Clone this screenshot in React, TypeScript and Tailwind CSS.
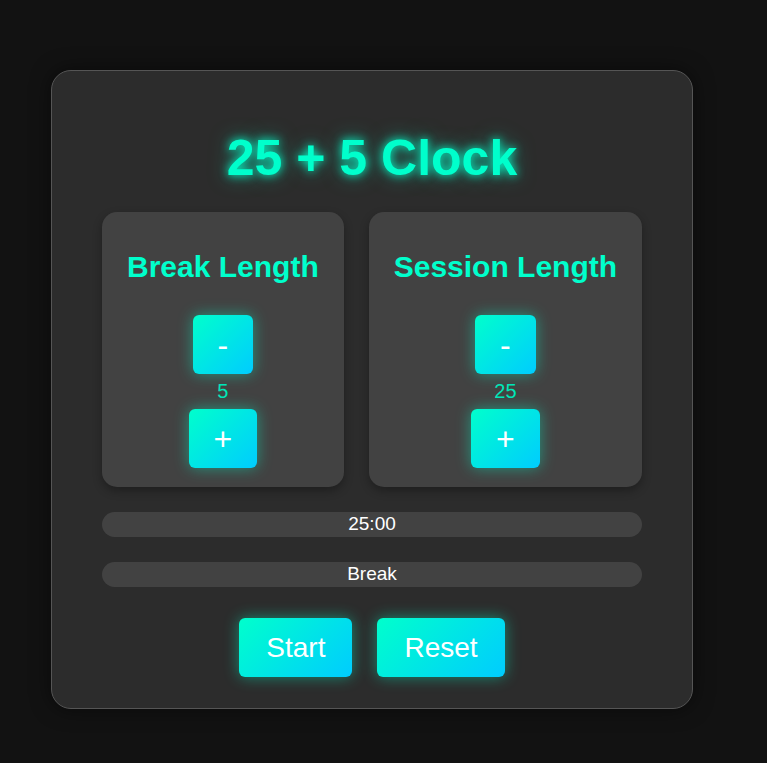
import React, { useState } from 'react';

const gradBtn =
  'flex items-center justify-center rounded-[6px] bg-[linear-gradient(135deg,#00ffcc,#00ccff)] text-white shadow-[0_0_15px_rgba(0,255,204,0.45)]';

function LengthControl({ title, value, onDec, onInc }: { title: string; value: number; onDec: () => void; onInc: () => void }) {
  return (
    <div className="flex flex-auto flex-col items-center rounded-[15px] bg-[#424242] px-[25px] pt-[38px] pb-[19px] shadow-[0_4px_10px_rgba(0,0,0,0.3)]">
      <h2 className="whitespace-nowrap text-[30px] font-bold leading-[34px] text-[#00ffcc]">{title}</h2>
      <button onClick={onDec} className={`${gradBtn} mt-[31px] h-[59px] px-[25px] text-[32px] leading-none`}>
        -
      </button>
      <div className="mt-[5px] mb-[6px] text-[20px] leading-[24px] text-[#00e6b8]">{value}</div>
      <button onClick={onInc} className={`${gradBtn} h-[59px] px-[25px] text-[32px] leading-none`}>
        +
      </button>
    </div>
  );
}

export default function App() {
  const [breakLen, setBreakLen] = useState(5);
  const [sessionLen, setSessionLen] = useState(25);

  return (
    <div className="min-h-[763px] bg-[#121212] pt-[70px] pl-[51px] font-['Liberation_Sans',Arial,sans-serif]">
      <div className="w-[642px] rounded-[20px] border border-[#555555] bg-[#2c2c2c] px-[50px] pt-[58px] pb-[31px] shadow-[0_0_20px_rgba(0,0,0,0.5)]">
        <h1 className="text-center text-[50px] font-bold leading-[58px] text-[#00ffcc] [text-shadow:0_0_10px_#00ffcc,0_0_20px_rgba(0,255,204,0.5)]">
          25 + 5 Clock
        </h1>

        <div className="mt-[25px] flex gap-[25px]">
          <LengthControl
            title="Break Length"
            value={breakLen}
            onDec={() => setBreakLen((v) => Math.max(1, v - 1))}
            onInc={() => setBreakLen((v) => Math.min(60, v + 1))}
          />
          <LengthControl
            title="Session Length"
            value={sessionLen}
            onDec={() => setSessionLen((v) => Math.max(1, v - 1))}
            onInc={() => setSessionLen((v) => Math.min(60, v + 1))}
          />
        </div>

        <div className="mt-[25px] flex h-[25px] items-center justify-center rounded-full bg-[#424242] text-[19px] text-white">
          {String(sessionLen).padStart(2, '0')}:00
        </div>
        <div className="mt-[25px] flex h-[25px] items-center justify-center rounded-full bg-[#424242] text-[19px] text-white">
          Break
        </div>

        <div className="mt-[31px] flex justify-center gap-[25px]">
          <button className={`${gradBtn} h-[59px] px-[27px] text-[28px] leading-none`}>Start</button>
          <button className={`${gradBtn} h-[59px] px-[27px] text-[28px] leading-none`}>Reset</button>
        </div>
      </div>
    </div>
  );
}
